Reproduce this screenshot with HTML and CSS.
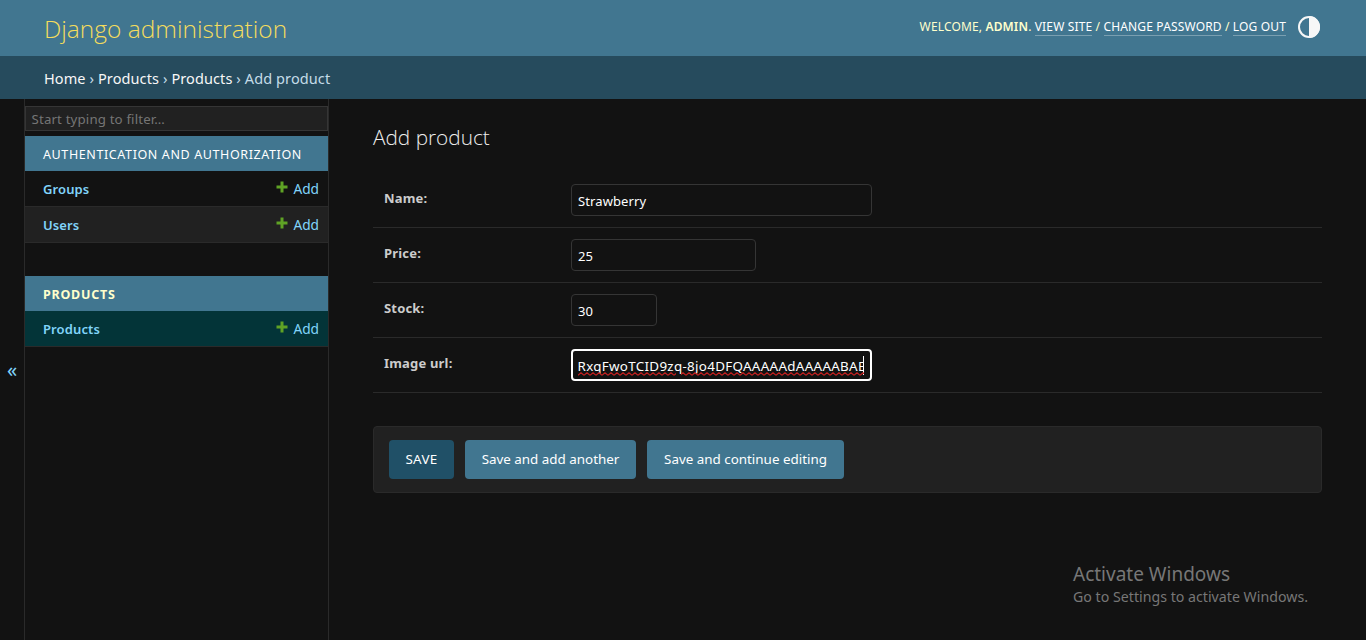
FILE: index.html
```
<!DOCTYPE html>
<html lang="en">
<head>
<meta charset="utf-8">
<title>Add product | Django site admin</title>
<link rel="stylesheet" href="styles.css">
</head>
<body>
<svg class="defs" width="0" height="0" aria-hidden="true">
  <symbol id="plus" viewBox="0 0 12 12"><path d="M4.5 .5h3v4h4v3h-4v4h-3v-4h-4v-3h4z" fill="#5fa225"/></symbol>
</svg>
<header class="header">
  <h1 class="brand">Django administration</h1>
  <div class="tools">
    <span>Welcome, <strong>admin</strong>. <a>View site</a> / <a>Change password</a> / <a>Log out</a></span>
    <svg class="theme" viewBox="0 0 24 24"><circle cx="12" cy="12" r="10" fill="none" stroke="#f7f7f7" stroke-width="2"/><path d="M12 1a11 11 0 0 1 0 22z" fill="#f7f7f7"/></svg>
  </div>
</header>
<nav class="crumbs"><a>Home</a> › <a>Products</a> › <a>Products</a> › Add product</nav>
<div class="shell">
  <button class="toggle">«</button>
  <aside class="sidebar">
    <div class="filter">Start typing to filter…</div>
    <section class="module">
      <h2 class="caption">Authentication and Authorization</h2>
      <div class="model"><b>Groups</b><a class="add"><svg><use href="#plus"/></svg><span>Add</span></a></div>
      <div class="model alt"><b>Users</b><a class="add"><svg><use href="#plus"/></svg><span>Add</span></a></div>
    </section>
    <section class="module">
      <h2 class="caption current">Products</h2>
      <div class="model selected"><b>Products</b><a class="add"><svg><use href="#plus"/></svg><span>Add</span></a></div>
    </section>
  </aside>
  <main class="content">
    <h1 class="title">Add product</h1>
    <div class="row"><label class="label">Name:</label><div class="field wide">Strawberry</div></div>
    <div class="row"><label class="label">Price:</label><div class="field mid">25</div></div>
    <div class="row"><label class="label">Stock:</label><div class="field small">30</div></div>
    <div class="row"><label class="label">Image url:</label><div class="field wide focus"><span class="clip">RxqFwoTCID9zq-8jo4DFQAAAAAdAAAAABAE</span><i class="caret"></i>
      <svg class="squiggle" width="287" height="4"><defs><pattern id="wave" width="6" height="4" patternUnits="userSpaceOnUse"><path d="M0 3.2L3 .8L6 3.2" fill="none" stroke="#c51f1f" stroke-width="1.1"/></pattern></defs><path d="M0 0h98v4H0zM103 0h183v4H103z" fill="url(#wave)"/></svg></div></div>
    <div class="submit">
      <button class="btn default">SAVE</button>
      <button class="btn another">Save and add another</button>
      <button class="btn continue">Save and continue editing</button>
    </div>
  </main>
</div>
<div class="activate"><p class="act1">Activate Windows</p><p class="act2">Go to Settings to activate Windows.</p></div>
</body>
</html>
```
FILE: styles.css
```
* { box-sizing: border-box; }
body { margin: 0; height: 640px; overflow: hidden; display: flex; flex-direction: column; background: #121212; color: #eee; font: 13px/18px "Noto Sans", "Open Sans", sans-serif; }
h1, h2, p { margin: 0; font-weight: 400; }
button { border: 0; padding: 0; font: inherit; }
.defs { position: absolute; }
.header { height: 56px; flex: none; background: #417690; display: flex; justify-content: space-between; padding: 0 45px 0 44px; color: #ffc; }
.brand { font: 300 24.5px/58px "Open Sans", "Noto Sans", sans-serif; color: #f5dd5d; }
.tools { display: flex; align-items: center; gap: 11px; height: 54px; font-size: 12px; line-height: 15px; letter-spacing: .15px; text-transform: uppercase; }
.tools span { padding-bottom: 2px; }
.tools strong { font-weight: 600; }
.tools a { color: #fff; border-bottom: 1px solid rgba(255,255,255,.3); }
.theme { width: 24px; height: 24px; }
.crumbs { height: 43px; flex: none; background: #264b5d; color: #c4dce8; padding-left: 44px; font-size: 14.5px; line-height: 45px; letter-spacing: .1px; }
.crumbs a { color: #f7f7f7; }
.shell { flex: 1; display: flex; min-height: 0; }
.toggle { width: 25px; background: #121212; border-right: 1px solid #2a2a2a; color: #81d4fa; font-size: 20px; display: flex; align-items: center; justify-content: center; }
.sidebar { width: 304px; border-right: 1px solid #2a2a2a; padding-top: 7px; }
.filter { height: 25px; border: 1px solid #353535; background: #212121; color: #757575; padding-left: 5.5px; font-size: 13.3px; line-height: 24px; letter-spacing: .14px; margin-bottom: 5px; }
.module { margin-bottom: 33px; }
.caption { height: 35px; background: #417690; padding-left: 18px; font-size: 12.5px; line-height: 37px; letter-spacing: .61px; text-transform: uppercase; color: #fff; }
.current { color: #ffc; font-weight: 700; letter-spacing: .8px; }
.current { letter-spacing: .75px; }
.model { height: 36px; display: flex; justify-content: space-between; border-bottom: 1px solid #2a2a2a; padding: 0 9px 0 18px; line-height: 36px; color: #81d4fa; }
.model b { font-weight: 600; letter-spacing: .12px; }
.alt { background: #212121; }
.selected { background: #033438; }
.add { display: flex; gap: 5px; font-size: 13.7px; }
.add svg { width: 12px; height: 12px; margin-top: 10px; }
.content { flex: 1; padding: 22px 44px 0; }
.title { height: 52px; font: 300 20.8px/33px "Open Sans", "Noto Sans", sans-serif; color: #eee; }
.row { display: flex; height: 55px; padding: 11px; border-bottom: 1px solid #2a2a2a; }
.label { width: 187px; font-weight: 700; color: #ccc; line-height: 29px; letter-spacing: .18px; }
.field { position: relative; height: 32px; border: 1px solid #353535; border-radius: 4px; padding: 0 6px; line-height: 33px; letter-spacing: .1px; color: #fff; }
.wide { width: 301px; }
.mid { width: 185px; }
.small { width: 86px; }
.focus { border: 2px solid #fff; padding: 0 4.5px; line-height: 31px; }
.clip { display: block; width: 286px; height: 28px; overflow: hidden; white-space: nowrap; font-size: 13.4px; letter-spacing: .3px; }
.caret { position: absolute; left: 290px; top: 5px; width: 1px; height: 19px; background: #fff; }
.squiggle { position: absolute; left: 5px; top: 21px; }
.submit { display: flex; gap: 11px; height: 67px; margin-top: 33px; padding: 13px 15px; background: #212121; border: 1px solid #2a2a2a; border-radius: 4px; }
.btn { height: 39px; padding-bottom: 2px; border-radius: 4px; background: #417690; color: #fff; font-size: 13.4px; }
.default { width: 65px; background: #205067; letter-spacing: .3px; }
.another { width: 171px; }
.continue { width: 197px; }
.activate { position: absolute; left: 1073px; top: 560px; color: #777; white-space: nowrap; }
.act1 { font-size: 19px; line-height: 28px; }
.act2 { font-size: 14.2px; line-height: 18px; }
```
